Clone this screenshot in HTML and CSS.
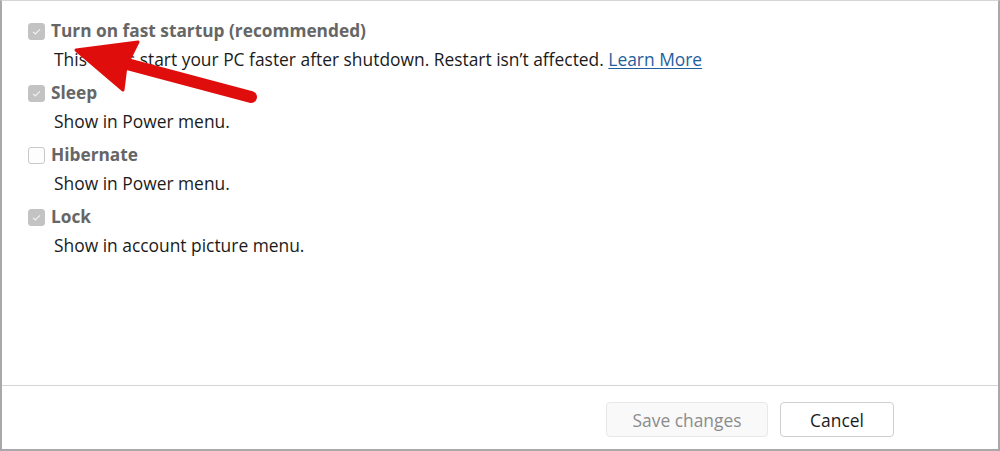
FILE: index.html
```html
<!DOCTYPE html>
<html>
<head>
<meta charset="utf-8">
<link rel="stylesheet" href="styles.css">
</head>
<body>
<div class="panel">
  <div class="options">
    <div class="option">
      <div class="option-head">
        <span class="box checked"><svg viewBox="0 0 17 17"><path d="M4.6 8.8 L7.2 11.3 L12.4 6" /></svg></span>
        <span class="title">Turn on fast startup (recommended)</span>
      </div>
      <div class="desc">This helps start your PC faster after shutdown. Restart isn’t affected. <a class="link" href="#">Learn More</a></div>
    </div>
    <div class="option">
      <div class="option-head">
        <span class="box checked"><svg viewBox="0 0 17 17"><path d="M4.6 8.8 L7.2 11.3 L12.4 6" /></svg></span>
        <span class="title">Sleep</span>
      </div>
      <div class="desc">Show in Power menu.</div>
    </div>
    <div class="option">
      <div class="option-head">
        <span class="box"></span>
        <span class="title">Hibernate</span>
      </div>
      <div class="desc">Show in Power menu.</div>
    </div>
    <div class="option">
      <div class="option-head">
        <span class="box checked"><svg viewBox="0 0 17 17"><path d="M4.6 8.8 L7.2 11.3 L12.4 6" /></svg></span>
        <span class="title">Lock</span>
      </div>
      <div class="desc">Show in account picture menu.</div>
    </div>
  </div>
  <div class="footer">
    <button class="btn disabled">Save changes</button>
    <button class="btn">Cancel</button>
  </div>
  <svg class="arrow" width="1000" height="451" viewBox="0 0 1000 451">
    <line x1="112" y1="60" x2="251" y2="97" class="shaft"/>
    <polygon points="76,50 138,42 126,66 123,90" class="head"/>
  </svg>
</div>
</body>
</html>
```

FILE: styles.css
```css
* { box-sizing: border-box; }
html, body {
  margin: 0;
  padding: 0;
  background: #ffffff;
}
body {
  font-family: "Open Sans", "Noto Sans", sans-serif;
  color: #1b1b1b;
}
.panel {
  position: relative;
  width: 1000px;
  height: 451px;
  border-top: 1px solid #d6d6d6;
  border-left: 2px solid #a8a8ad;
  border-right: 2px solid #a8a8ad;
  border-bottom: 2px solid #a8a8ad;
  display: flex;
  flex-direction: column;
  overflow: hidden;
}
.options {
  flex: 1;
  padding: 16px 0 0 26px;
  display: flex;
  flex-direction: column;
  gap: 6px;
}
.option-head {
  display: flex;
  align-items: center;
  height: 28px;
  gap: 6px;
}
.box {
  width: 17px;
  height: 17px;
  border-radius: 3px;
  border: 1px solid #c9c9c9;
  background: #fdfdfd;
  display: flex;
}
.box.checked {
  background: #c3c3c3;
  border-color: #c3c3c3;
}
.box svg {
  width: 15px;
  height: 15px;
}
.box svg path {
  fill: none;
  stroke: #f4f4f4;
  stroke-width: 1.2;
}
.title {
  font-size: 17.3px;
  font-weight: 700;
  color: #666666;
  line-height: 28px;
}
.desc {
  font-size: 17.4px;
  line-height: 28px;
  margin-left: 26px;
  color: #1b1b1b;
}
.link {
  color: #1f5f9e;
  text-decoration: underline;
  text-underline-offset: 2px;
}
.footer {
  height: 64px;
  border-top: 1px solid #d4d4d4;
  display: flex;
  justify-content: flex-end;
  align-items: flex-start;
  padding: 16px 104px 0 0;
  gap: 12px;
}
.btn {
  height: 35px;
  font-family: "Open Sans", "Noto Sans", sans-serif;
  font-size: 17.4px;
  border-radius: 4px;
  border: 1px solid #cfcfcf;
  background: #ffffff;
  color: #1b1b1b;
  padding: 0;
  width: 114px;
}
.btn.disabled {
  width: 162px;
  background: #f9f9f9;
  border-color: #e8e8e8;
  color: #8c8c8c;
}
.arrow {
  position: absolute;
  left: -2px;
  top: -1px;
  pointer-events: none;
}
.shaft {
  stroke: #e00d0d;
  stroke-width: 12;
  stroke-linecap: round;
}
.head {
  fill: #e00d0d;
  stroke: #e00d0d;
  stroke-width: 3;
  stroke-linejoin: round;
}
```
